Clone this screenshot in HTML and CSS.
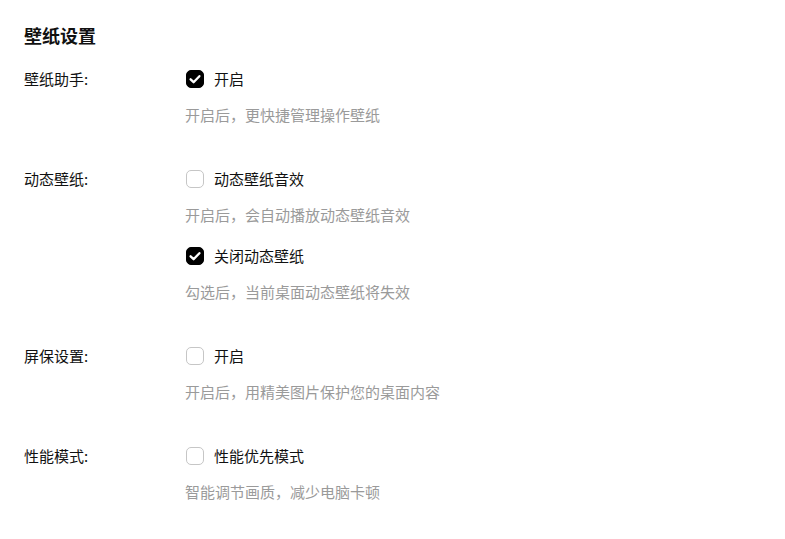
FILE: index.html
```html
<!DOCTYPE html>
<html lang="zh-CN">
<head>
<meta charset="utf-8">
<title>壁纸设置</title>
<link rel="stylesheet" href="styles.css">
</head>
<body>
<main class="page">
  <h1 class="title">壁纸设置</h1>

  <section class="group">
    <div class="label">壁纸助手:</div>
    <div class="options">
      <div class="option">
        <label class="check-row">
          <span class="box checked"><svg viewBox="0 0 18 18" width="18" height="18"><path d="M4.6 9.3 L7.6 12.2 L13.4 6.2" fill="none" stroke="#fff" stroke-width="2.3" stroke-linecap="round" stroke-linejoin="round"/></svg></span>
          <span class="text">开启</span>
        </label>
        <div class="desc">开启后，更快捷管理操作壁纸</div>
      </div>
    </div>
  </section>

  <section class="group">
    <div class="label">动态壁纸:</div>
    <div class="options">
      <div class="option">
        <label class="check-row">
          <span class="box"></span>
          <span class="text">动态壁纸音效</span>
        </label>
        <div class="desc">开启后，会自动播放动态壁纸音效</div>
      </div>
      <div class="option">
        <label class="check-row">
          <span class="box checked"><svg viewBox="0 0 18 18" width="18" height="18"><path d="M4.6 9.3 L7.6 12.2 L13.4 6.2" fill="none" stroke="#fff" stroke-width="2.3" stroke-linecap="round" stroke-linejoin="round"/></svg></span>
          <span class="text">关闭动态壁纸</span>
        </label>
        <div class="desc">勾选后，当前桌面动态壁纸将失效</div>
      </div>
    </div>
  </section>

  <section class="group">
    <div class="label">屏保设置:</div>
    <div class="options">
      <div class="option">
        <label class="check-row">
          <span class="box"></span>
          <span class="text">开启</span>
        </label>
        <div class="desc">开启后，用精美图片保护您的桌面内容</div>
      </div>
    </div>
  </section>

  <section class="group">
    <div class="label">性能模式:</div>
    <div class="options">
      <div class="option">
        <label class="check-row">
          <span class="box"></span>
          <span class="text">性能优先模式</span>
        </label>
        <div class="desc">智能调节画质，减少电脑卡顿</div>
      </div>
    </div>
  </section>
</main>
</body>
</html>
```

FILE: styles.css
```css
html, body {
  margin: 0;
  padding: 0;
  background: #ffffff;
}

body {
  font-family: "Noto Sans CJK SC", "Noto Sans", sans-serif;
  color: #111111;
}

.page {
  padding: 23px 24px 0 24px;
}

.title {
  margin: 0 0 22px 0;
  font-size: 18px;
  line-height: 24px;
  font-weight: 700;
  color: #111111;
}

.group {
  display: grid;
  grid-template-columns: 161px 1fr;
  margin-bottom: 44px;
}

.label {
  font-size: 15px;
  line-height: 20px;
  color: #111111;
}

.options {
  display: flex;
  flex-direction: column;
  gap: 21px;
}

.option {
  display: flex;
  flex-direction: column;
  gap: 16px;
}

.check-row {
  display: flex;
  align-items: center;
  height: 20px;
}

.box {
  box-sizing: border-box;
  width: 18px;
  height: 18px;
  border: 1px solid #c6c6c6;
  border-radius: 5px;
  background: #ffffff;
  margin-left: 1px;
  margin-right: 10px;
  display: flex;
  flex-shrink: 0;
}

.box.checked {
  background: #000000;
  border-color: #000000;
}

.box svg {
  margin: -1px;
}

.text {
  font-size: 15px;
  line-height: 20px;
  color: #111111;
}

.desc {
  font-size: 15px;
  line-height: 20px;
  color: #9a9a9a;
}
```
